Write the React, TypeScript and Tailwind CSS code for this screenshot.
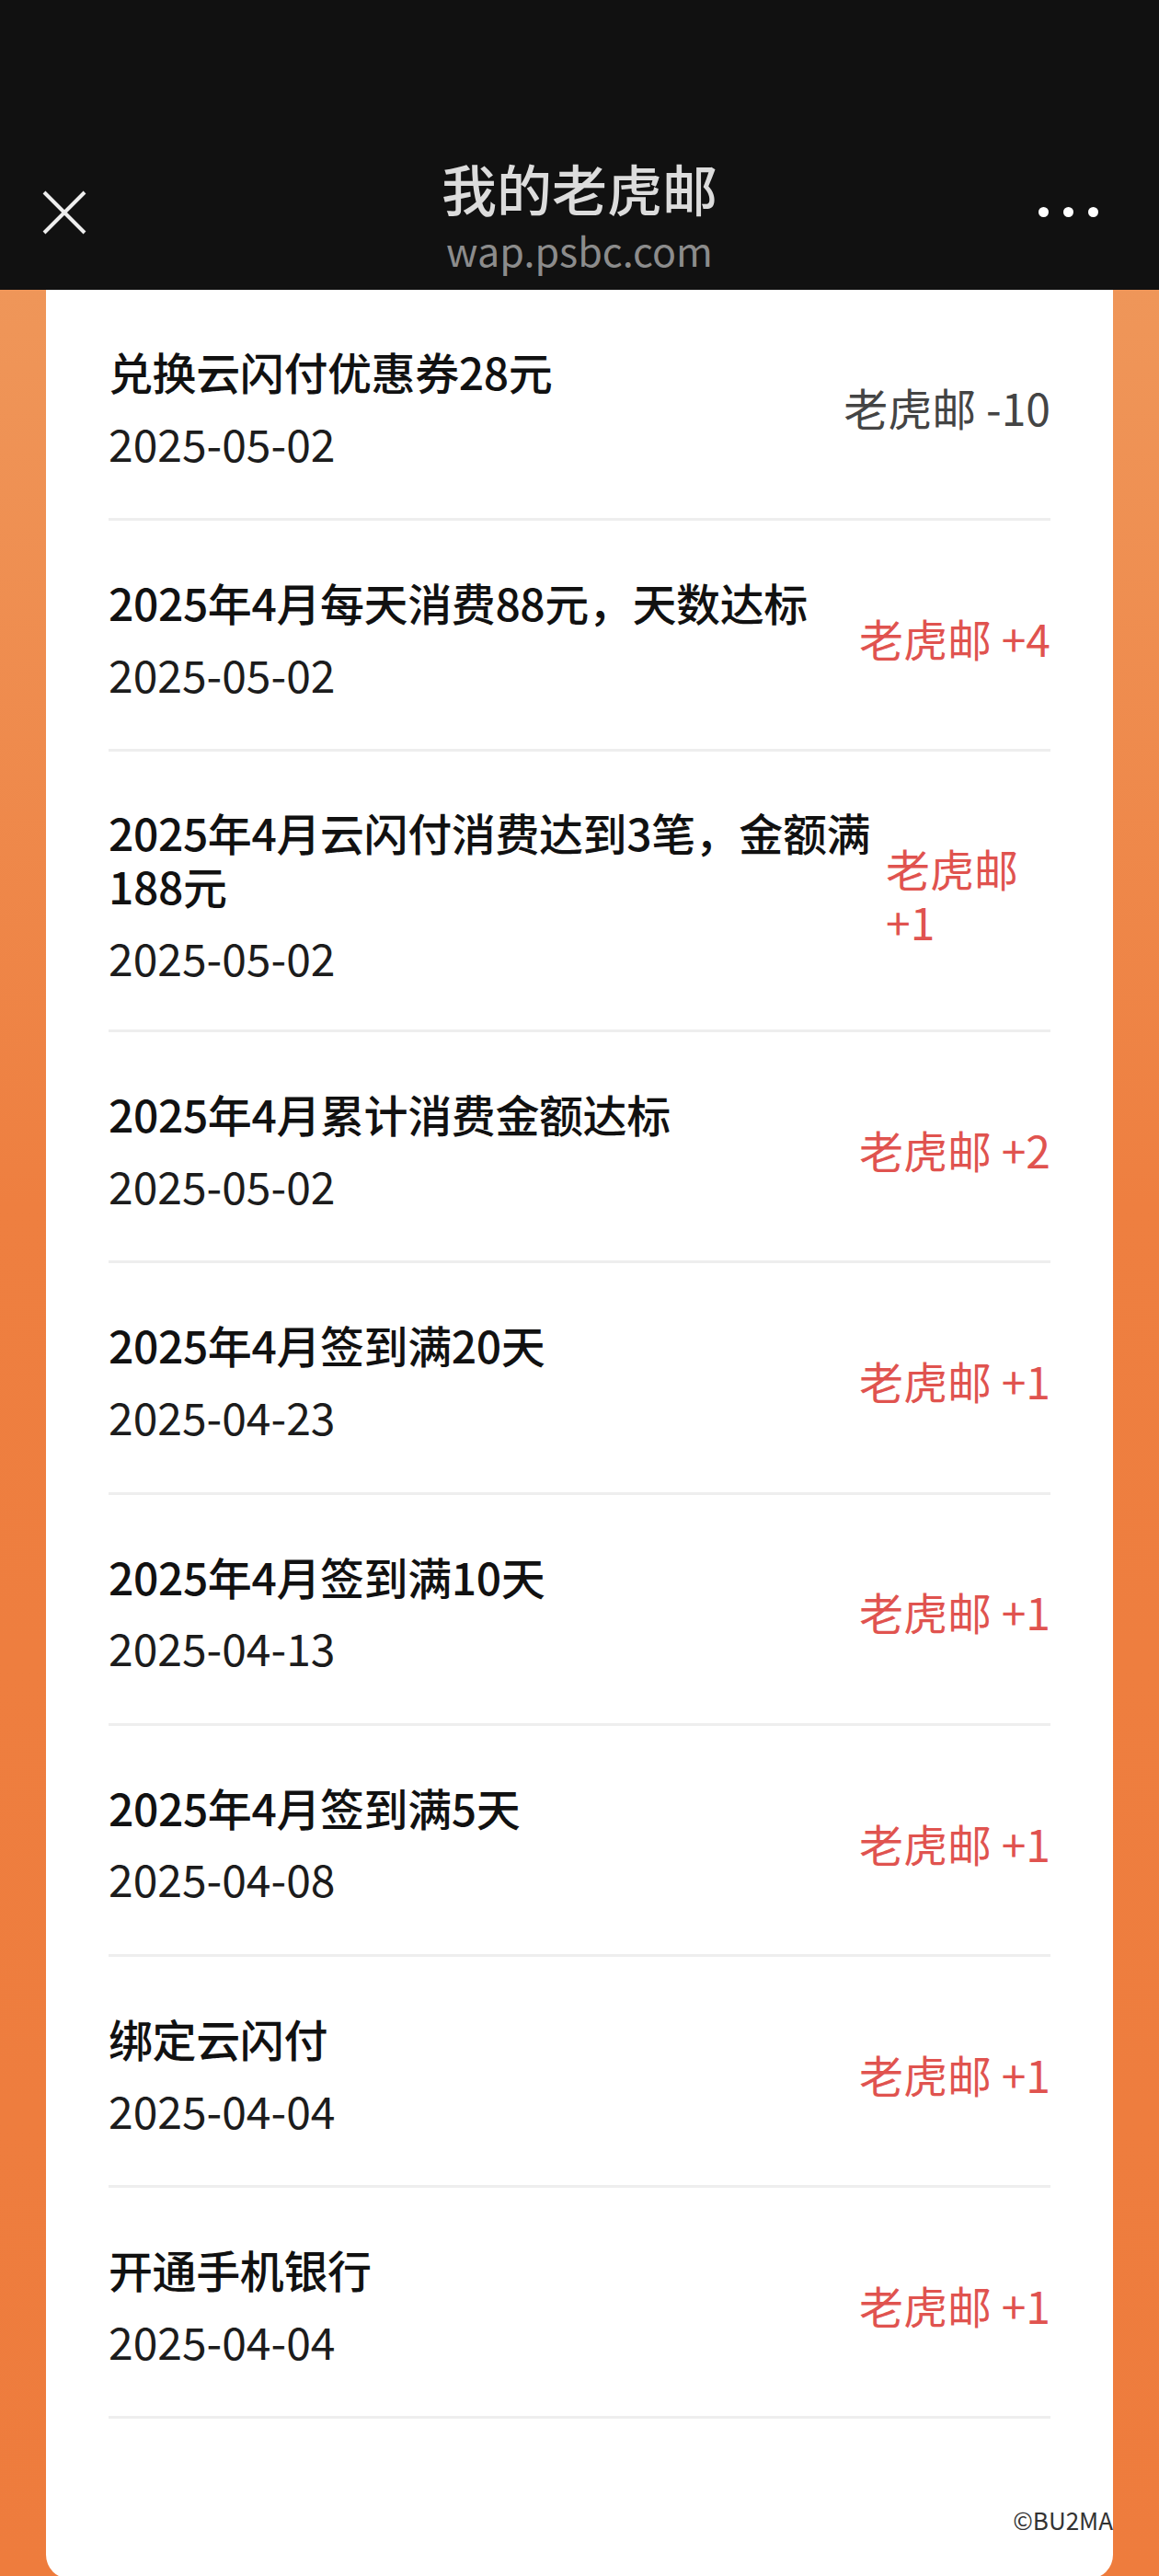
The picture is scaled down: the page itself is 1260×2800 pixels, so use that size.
import React from "react";

type Row = {
  title: React.ReactNode;
  date: string;
  value: string;
  negative?: boolean;
  narrow?: boolean;
};

const rows: Row[] = [
  { title: "兑换云闪付优惠券28元", date: "2025-05-02", value: "老虎邮 -10", negative: true },
  { title: "2025年4月每天消费88元，天数达标", date: "2025-05-02", value: "老虎邮 +4" },
  {
    title: (
      <>
        <span className="block whitespace-nowrap">2025年4月云闪付消费达到3笔，金额满</span>
        <span className="block">188元</span>
      </>
    ),
    date: "2025-05-02",
    value: "老虎邮 +1",
    narrow: true,
  },
  { title: "2025年4月累计消费金额达标", date: "2025-05-02", value: "老虎邮 +2" },
  { title: "2025年4月签到满20天", date: "2025-04-23", value: "老虎邮 +1" },
  { title: "2025年4月签到满10天", date: "2025-04-13", value: "老虎邮 +1" },
  { title: "2025年4月签到满5天", date: "2025-04-08", value: "老虎邮 +1" },
  { title: "绑定云闪付", date: "2025-04-04", value: "老虎邮 +1" },
  { title: "开通手机银行", date: "2025-04-04", value: "老虎邮 +1" },
];

const font = { fontFamily: '"Noto Sans CJK SC", "Noto Sans", sans-serif' };

export default function App() {
  return (
    <div
      className="w-[1260px] h-[2800px] overflow-hidden flex flex-col bg-[#111111]"
      style={font}
    >
      {/* Header */}
      <header className="h-[315px] shrink-0 bg-[#111111] grid grid-cols-[1fr_auto_1fr] items-start px-[46px] pt-[173px]">
        <div className="mt-[34px]">
          <svg width="48" height="48" viewBox="0 0 48 48">
            <path d="M2 2 L46 46 M46 2 L2 46" stroke="#eeeeee" strokeWidth="4" strokeLinecap="butt" />
          </svg>
        </div>
        <div className="flex flex-col items-center">
          <div className="text-[60px] leading-[62px] font-medium text-[#dcdcdc]">我的老虎邮</div>
          <div className="text-[43px] leading-[46px] text-[#8c8c8c] mt-[13px]">wap.psbc.com</div>
        </div>
        <div className="justify-self-end mt-[52px] flex gap-[16px] pr-[20px]">
          <span className="w-[11px] h-[11px] rounded-full bg-white" />
          <span className="w-[11px] h-[11px] rounded-full bg-white" />
          <span className="w-[11px] h-[11px] rounded-full bg-white" />
        </div>
      </header>

      {/* Body */}
      <div className="flex-1 bg-gradient-to-b from-[#ef9659] via-[#ee7f40] via-40% to-[#ee7c3d] px-[50px]">
        <div className="bg-white rounded-b-[26px] h-[2488px] px-[68px] relative">
          {rows.map((r, i) => (
            <div
              key={i}
              className={
                "flex items-center justify-between gap-[20px] border-b-[3px] border-[#eeeeee] " +
                (r.narrow ? "pt-[59px] pb-[50px]" : "pt-[60px] pb-[53px]")
              }
            >
              <div className="flex-1 min-w-0">
                <div className="text-[48px] leading-[57.6px] font-medium tracking-[-0.4px] text-[#111111]">
                  {r.title}
                </div>
                <div className="text-[48px] leading-[57.6px] text-[#1c1c1c] mt-[20px]">{r.date}</div>
              </div>
              <div
                className={
                  (r.narrow ? "w-[179px] shrink-0 " : "shrink-0 ") +
                  "text-[48px] leading-[57.6px] " +
                  (r.negative ? "text-[#444444]" : "text-[#e0534f]")
                }
              >
                {r.value}
              </div>
            </div>
          ))}
          <div className="absolute right-0 top-[2408px] text-[26px] leading-[32px] text-[#333333]">©BU2MA</div>
        </div>
      </div>
    </div>
  );
}
